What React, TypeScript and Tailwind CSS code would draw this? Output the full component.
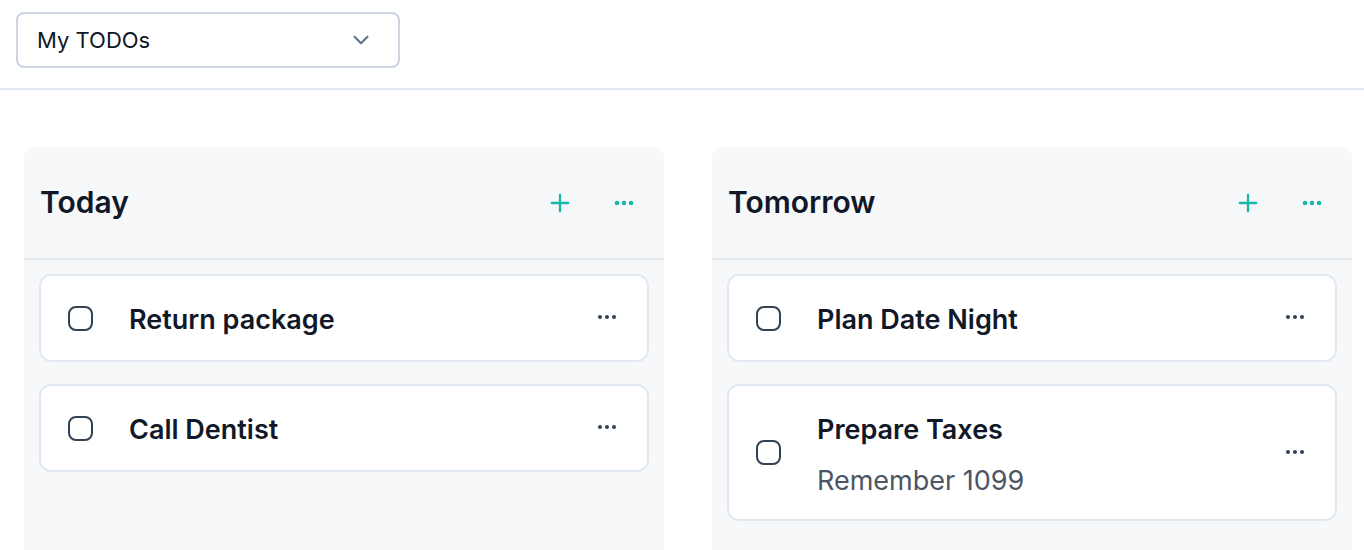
import { Plus, MoreHorizontal, ChevronDown } from "lucide-react";

type Todo = { title: string; note?: string };

const columns: { name: string; todos: Todo[] }[] = [
  { name: "Today", todos: [{ title: "Return package" }, { title: "Call Dentist" }] },
  {
    name: "Tomorrow",
    todos: [{ title: "Plan Date Night" }, { title: "Prepare Taxes", note: "Remember 1099" }],
  },
];

function TodoCard({ todo }: { todo: Todo }) {
  return (
    <div className="bg-white border-2 border-[#e2e8f0] rounded-xl flex items-center pl-[27px] pr-[28px] pt-[27px] pb-[23px]">
      <div className="w-[25px] h-[25px] rounded-[8px] border-2 border-[#334155] shrink-0 -mt-[4px]" />
      <div className="flex-1 ml-[36px]">
        <div className="text-[27px] font-semibold text-[#111827] leading-[34px]">{todo.title}</div>
        {todo.note && (
          <div className="text-[27px] text-[#4b5563] leading-[34px] mt-[17px] -mb-[2px]">{todo.note}</div>
        )}
      </div>
      <MoreHorizontal className="w-[24px] h-[24px] text-[#334155] -mt-[6px]" strokeWidth={2} />
    </div>
  );
}

export default function App() {
  return (
    <div className="min-h-screen bg-white" style={{ fontFamily: "Inter, 'Noto Sans', sans-serif" }}>
      <div className="px-[16px] pt-[12px] pb-[20px] border-b-2 border-[#e2e8f0]">
        <button className="w-[384px] h-[56px] border-2 border-[#cbd5e1] rounded-lg flex items-center justify-between pl-[19px] pr-[24px] bg-white">
          <span className="text-[22px] text-[#111827]">My TODOs</span>
          <ChevronDown className="w-[26px] h-[26px] text-[#64748b]" strokeWidth={2} />
        </button>
      </div>
      <div className="flex gap-[48px] pl-[24px] pt-[57px]">
        {columns.map((col) => (
          <div key={col.name} className="w-[640px] bg-[#f7f8fa] rounded-xl h-[420px]">
            <div className="flex items-center h-[113px] pl-[16px] pr-[28px] border-b-2 border-[#e2e8f0]">
              <h2 className="flex-1 text-[30px] font-semibold text-[#111827]">{col.name}</h2>
              <Plus className="w-[28px] h-[28px] text-[#14b8a6] mr-[38px]" strokeWidth={2} />
              <MoreHorizontal className="w-[24px] h-[24px] text-[#14b8a6]" strokeWidth={2.5} />
            </div>
            <div className="px-[15px] pt-[14px] flex flex-col gap-[22px]">
              {col.todos.map((t) => (
                <TodoCard key={t.title} todo={t} />
              ))}
            </div>
          </div>
        ))}
      </div>
    </div>
  );
}
